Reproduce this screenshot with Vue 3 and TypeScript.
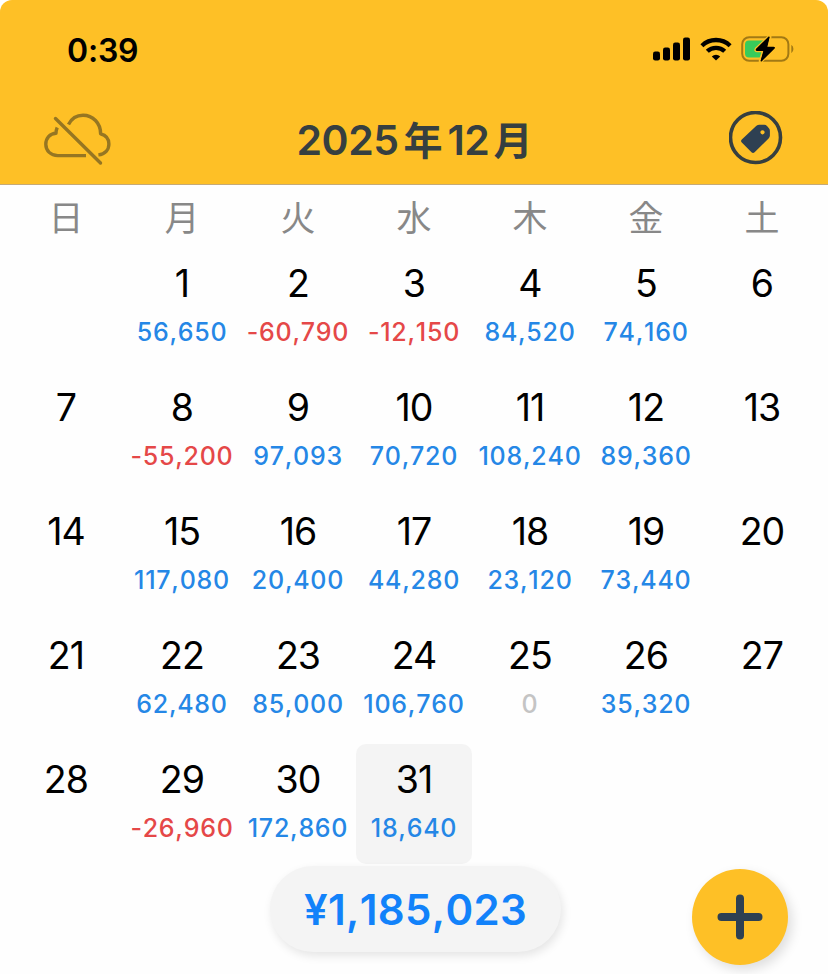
<script setup lang="ts">
interface Day {
  date: number
  amount?: number
}

const weekdays: string[] = ['日', '月', '火', '水', '木', '金', '土']

const amounts: Record<number, number> = {
  1: 56650, 2: -60790, 3: -12150, 4: 84520, 5: 74160,
  8: -55200, 9: 97093, 10: 70720, 11: 108240, 12: 89360,
  15: 117080, 16: 20400, 17: 44280, 18: 23120, 19: 73440,
  22: 62480, 23: 85000, 24: 106760, 25: 0, 26: 35320,
  29: -26960, 30: 172860, 31: 18640,
}

const selected = 31
const leadingBlanks = 1
const days: Day[] = Array.from({ length: 31 }, (_, i) => ({ date: i + 1, amount: amounts[i + 1] }))
const total = Object.values(amounts).reduce((sum, n) => sum + n, 0)

const format = (n: number): string => n.toLocaleString('en-US')
const tone = (n: number): string => (n > 0 ? 'plus' : n < 0 ? 'minus' : 'zero')
</script>

<template>
  <div class="screen">
    <header class="header">
      <div class="status">
        <span class="time">0:39</span>
        <div class="indicators">
          <svg class="signal" width="38" height="24" viewBox="0 0 38 24">
            <rect x="0" y="14.5" width="7" height="9" rx="2.2" />
            <rect x="10" y="10.5" width="7" height="13" rx="2.2" />
            <rect x="20" y="5.5" width="7" height="18" rx="2.2" />
            <rect x="30" y="0.5" width="7" height="23" rx="2.2" />
          </svg>
          <svg class="wifi" width="32" height="24" viewBox="0 0 32 24">
            <g fill="none" stroke="#000" stroke-width="4.3">
              <path d="M1.9 8.7a20.3 20.3 0 0 1 28.2 0" />
              <path d="M7.3 14.3a12.5 12.5 0 0 1 17.4 0" />
            </g>
            <path d="M16 23.5l-4.2-4.1a6.3 6.3 0 0 1 8.4 0z" />
          </svg>
          <svg class="battery" width="54" height="28" viewBox="0 0 54 28">
            <rect x="1.2" y="2.2" width="46.2" height="23.6" rx="7" fill="none" stroke="#a27914" stroke-width="2" />
            <path d="M50.3 9.8a5.2 5.2 0 0 1 0 8.4z" fill="#a27914" />
            <path d="M8 5.5h16v17H8a4 4 0 0 1-4-4V9.5a4 4 0 0 1 4-4z" fill="#38cb5b" />
            <path d="M28.5 2L15.5 14.3q-.7 1 .6 1h7L19.7 26 33 13.3q.8-1-.5-1h-6.900z" fill="#000" stroke="#fec026" stroke-width="4" stroke-linejoin="round" paint-order="stroke" />
            <path d="M28 2L15.5 14.3q-.7 1 .6 1h7L20.2 26 33 13.3q.8-1-.5-1h-6.900z" stroke="#000" stroke-width="1.2" stroke-linejoin="round" />
          </svg>
        </div>
      </div>
      <div class="toolbar">
        <button class="tool" aria-label="cloud off">
          <svg width="68" height="56" viewBox="0 0 68 56" fill="none" stroke="#967622" stroke-width="3.4" stroke-linecap="butt" stroke-linejoin="round">
            <path d="M25.5 14.5C28.5 8.500 34 5.200 40 5.200c9.800 0 17.800 8 17.600 18.700 5 1.200 8.300 5 8.300 10.200 0 5.400-3.700 10-10.500 10.800" />
            <path d="M14.2 17.500c-.8 1.900-1.200 3.500-1.200 5.800-6.300.3-10.200 5.200-10.200 11 0 6.500 5 11.300 12 11.300H43" />
            <path d="M12.500 8.500l45 44.500" stroke-linecap="round" />
          </svg>
        </button>
        <h1 class="title"><span>2025</span><span class="kanji year">年</span><span>12</span><span class="kanji month">月</span></h1>
        <button class="tool" aria-label="tag">
          <svg width="54" height="54" viewBox="0 0 54 54">
            <circle cx="26.5" cy="26.5" r="25" fill="none" stroke="#363f40" stroke-width="3.6" />
            <path fill-rule="evenodd" fill="#2e4052" d="M12.8 28.5L26.6 15.4Q28 13.8 30 13.8h5.3q1.5 0 2.700 1.200l1.700 1.900q1.200 1.200 1.200 2.800v4.800q0 1.700-1.300 3L25.600 41.200q-1.600 1.500-3.100 0l-9.700-9.700q-1.500-1.500 0-3zM33.5 19.200a2.100 2.100 0 1 0 .01 0z" />
          </svg>
        </button>
      </div>
    </header>

    <main class="calendar">
      <div class="weekdays">
        <span v-for="w in weekdays" :key="w">{{ w }}</span>
      </div>
      <div class="days">
        <div v-for="b in leadingBlanks" :key="'blank' + b" />
        <div v-for="day in days" :key="day.date" class="day" :class="{ selected: day.date === selected }">
          <span class="date">{{ day.date }}</span>
          <span v-if="day.amount !== undefined" class="amount" :class="tone(day.amount)">{{ format(day.amount) }}</span>
        </div>
      </div>
    </main>

    <div class="total">¥{{ format(total) }}</div>
    <button class="add" aria-label="add">
      <svg width="46" height="46" viewBox="0 0 46 46" stroke="#2e4052" stroke-width="8" stroke-linecap="round">
        <path d="M23 4.5v37M4.5 23h37" />
      </svg>
    </button>
  </div>
</template>

<style>
body {
  background: #fff;
}
</style>

<style scoped>
.screen {
  position: relative;
  box-sizing: border-box;
  width: 828px;
  height: 974px;
  overflow: hidden;
  background: #fefefe;
  border-radius: 12px 12px 0 0;
  font-family: Inter, "Noto Sans CJK JP", sans-serif;
}
button {
  padding: 0;
  border: 0;
  background: none;
}
svg {
  display: block;
}
.header {
  box-sizing: border-box;
  height: 185px;
  background: #fec026;
  border-bottom: 1px solid #c5aa78;
}
.status {
  display: flex;
  justify-content: space-between;
  align-items: center;
  height: 98px;
  padding: 0 33px 0 67px;
}
.time {
  font-size: 32px;
  font-weight: 600;
  line-height: 40px;
  padding-top: 3px;
  letter-spacing: -0.2px;
}
.indicators {
  display: flex;
  align-items: center;
}
.wifi {
  margin-left: 9px;
}
.battery {
  margin-left: 9px;
}
.toolbar {
  display: flex;
  justify-content: space-between;
  align-items: center;
  height: 80px;
  padding: 0 45px 0 43px;
}
.title {
  display: flex;
  align-items: center;
  margin: 4px 11px 0 0;
  font-size: 41px;
  font-weight: 600;
  line-height: 48px;
  letter-spacing: -0.5px;
  color: #363f40;
}
.kanji {
  padding-bottom: 4px;
  font-family: "Noto Sans CJK JP", sans-serif;
  font-size: 39px;
  font-weight: 700;
  letter-spacing: 0;
}
.year {
  margin: 0 5px;
}
.month {
  margin-left: 4px;
}
.calendar {
  padding: 0 8px;
}
.weekdays {
  display: grid;
  grid-template-columns: repeat(7, 1fr);
  height: 63px;
  text-align: center;
  font-family: "Noto Sans CJK JP", sans-serif;
  font-size: 35px;
  line-height: 61px;
  color: #888;
}
.days {
  display: grid;
  grid-template-columns: repeat(7, 1fr);
  grid-auto-rows: 120px;
  row-gap: 4px;
}
.day {
  display: flex;
  flex-direction: column;
  align-items: center;
  padding-top: 14px;
  border-radius: 10px;
  box-sizing: border-box;
}
.selected {
  background: #f4f4f4;
}
.date {
  font-size: 37.5px;
  line-height: 44px;
  letter-spacing: -0.9px;
  color: #000;
}
.amount {
  margin-top: 10.5px;
  font-size: 25px;
  font-weight: 500;
  line-height: 30px;
  letter-spacing: 0.75px;
  font-kerning: none;
  white-space: nowrap;
}
.plus {
  color: #2587e6;
}
.minus {
  color: #e54848;
}
.zero {
  color: #c4c4c4;
}
.total {
  position: absolute;
  left: 270px;
  top: 866px;
  width: 291px;
  height: 86px;
  border-radius: 43px;
  background: #f4f4f4;
  box-shadow: 2px 4px 10px rgba(0, 0, 0, 0.1);
  text-align: center;
  font-size: 42px;
  font-weight: 600;
  line-height: 88px;
  letter-spacing: 0.3px;
  font-kerning: none;
  color: #1282fa;
}
.add {
  position: absolute;
  left: 692px;
  top: 869px;
  display: grid;
  place-items: center;
  width: 96px;
  height: 96px;
  border-radius: 50%;
  background: #fec026;
  box-shadow: 4px 5px 12px rgba(0, 0, 0, 0.13);
}
</style>
